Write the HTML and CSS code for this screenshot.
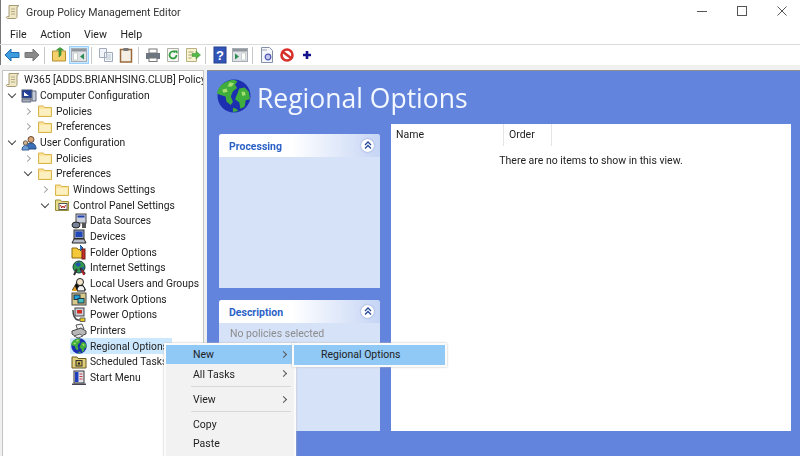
FILE: index.html
```html
<!DOCTYPE html>
<html lang="en">
<head>
  <meta charset="UTF-8">
  <title>Group Policy Management Editor</title>
  <link rel="stylesheet" href="styles.css">
</head>
<body>
  <svg class="defs" width="0" height="0">
    <symbol id="scroll" viewBox="0 0 16 16">
      <path d="M4 1.500h10l-2 1.500v9.500c0 1.500-1 2-2 2H2.500c-1.200 0-1.500-2 0-2H4z" fill="#efe6c4" stroke="#a49a78"/>
      <path d="M6 5h4M6 7.500h4M6 10h4" stroke="#b3a985"/>
    </symbol>
    <symbol id="folder" viewBox="0 0 16 16">
      <path d="M1.500 3h5l1 1.500h7v9h-13z" fill="#fbe39a" stroke="#d9b44f"/>
      <path d="M2.500 6h11v6.500h-11z" fill="#fdf0c0"/>
    </symbol>
    <symbol id="cpfolder" viewBox="0 0 16 16">
      <path d="M1.500 3h5l1 1.500h7v9h-13z" fill="#e9dc8a" stroke="#9a8f3a"/>
      <rect x="5" y="6.500" width="8" height="6" fill="#fff" stroke="#555"/>
      <path d="M6.500 8l1.200 3 1.300-2 1.300 2 1.200-3" fill="none" stroke="#b02020"/>
    </symbol>
    <symbol id="computer" viewBox="0 0 16 16">
      <rect x="1" y="2" width="10" height="8" fill="#20409a" stroke="#44506a"/>
      <path d="M3 4l5 4H3z" fill="#fff"/>
      <path d="M11 3h4v10h-4z" fill="#c7ccd8" stroke="#60687c"/>
      <path d="M1 11h9v3H1z" fill="#a8aebc" stroke="#60687c"/>
    </symbol>
    <symbol id="user" viewBox="0 0 16 16">
      <circle cx="10" cy="4.500" r="3" fill="#d9a679" stroke="#6a4a30"/>
      <path d="M5 14c0-4 2-6 5-6s5 2 5 6z" fill="#3a70b8" stroke="#274c80"/>
      <circle cx="4.500" cy="8" r="2.200" fill="#cdb090" stroke="#706050"/>
      <path d="M1 15c0-3 1.500-4.500 3.500-4.500S8 12 8 15z" fill="#6f9fd8" stroke="#3a5f90"/>
    </symbol>
    <symbol id="datasrc" viewBox="0 0 16 16">
      <rect x="5" y="1" width="10" height="9" fill="#c9cfdc" stroke="#444"/>
      <rect x="6.500" y="2.500" width="7" height="2" fill="#2040b0"/>
      <ellipse cx="5" cy="12" rx="4" ry="3" fill="#78839a" stroke="#222"/>
      <path d="M11 10v5h4v-5z" fill="#555"/>
    </symbol>
    <symbol id="device" viewBox="0 0 16 16">
      <rect x="3" y="1" width="10" height="8.500" fill="#9aa4c0" stroke="#333"/>
      <rect x="4.500" y="2.500" width="7" height="5.500" fill="#2048b8"/>
      <path d="M1 14l2-4h10l2 4z" fill="#b8bcc8" stroke="#222"/>
    </symbol>
    <symbol id="folderopt" viewBox="0 0 16 16">
      <path d="M1 4h5l1 1.500h5v8.500H1z" fill="#f5c83a" stroke="#8a6a10"/>
      <path d="M9 1l3 3-3 3" fill="#2f78c8" stroke="#204880"/>
      <rect x="11" y="5" width="3" height="10" fill="#c8302a" stroke="#701810"/>
    </symbol>
    <symbol id="internet" viewBox="0 0 16 16">
      <circle cx="8" cy="7" r="6" fill="#2f9a50" stroke="#1a3a40"/>
      <path d="M4 4l4-2 2 3-3 2zM9 8l4-1-1 4-3 1z" fill="#2050b0"/>
      <path d="M9 8l5 6M6 9l-3 6" stroke="#333" stroke-width="2"/>
      <path d="M11 10l2 5" stroke="#b02020" stroke-width="2"/>
    </symbol>
    <symbol id="users" viewBox="0 0 16 16">
      <path d="M1 14L8 2l7 12z" fill="#101010"/>
      <circle cx="9" cy="6" r="3.500" fill="#f1e4c8" stroke="#222"/>
      <path d="M6 15c0-3.500 1.500-5.500 4-5.500s4 2 4 5.500z" fill="#f0f0f0" stroke="#111"/>
      <path d="M1 15l3-5 2 5z" fill="#e0a020"/>
    </symbol>
    <symbol id="network" viewBox="0 0 16 16">
      <rect x="1" y="2" width="14" height="12" fill="#d6c98a" stroke="#444"/>
      <rect x="3" y="4" width="6" height="4.500" fill="#20a0d8" stroke="#234"/>
      <rect x="7" y="7.500" width="6" height="4.500" fill="#40c0c0" stroke="#234"/>
    </symbol>
    <symbol id="power" viewBox="0 0 16 16">
      <rect x="4" y="1" width="9" height="8" fill="#ccd0dc" stroke="#444"/>
      <rect x="6" y="3" width="5" height="3.500" fill="#d03020"/>
      <path d="M2 3c0 6 1 9 5 10h4" fill="none" stroke="#444" stroke-width="1.500"/>
      <path d="M9 11h5v3.500H9z" fill="#e8c820" stroke="#665"/>
    </symbol>
    <symbol id="printer" viewBox="0 0 16 16">
      <path d="M5 2l6-1 2 5-6 2z" fill="#f4f4f4" stroke="#555"/>
      <path d="M1 8l9-3 5 3v3l-9 3.500L1 11z" fill="#b8b8b8" stroke="#444"/>
      <path d="M3 13l6-2 3 2-5 2z" fill="#e8e8e8" stroke="#666"/>
    </symbol>
    <symbol id="globe" viewBox="0 0 32 32">
      <circle cx="16" cy="16" r="15.500" fill="#1c2fb0"/>
      <path d="M9 2.500c4-2 9-2 10 0l-2 3 2 3-4 3-2 5 2 5-2 3-4-3-1-5-6-2-2-1C1 8 5 4 9 2.500z" fill="#3fae3c"/>
      <path d="M21 9l5-1 4 4 1 7-4 1-1 6-4 2-1-6-4-3 2-5z" fill="#3fae3c"/>
      <path d="M12 3l4 1-2 3-4 0zM5 10l4-1 1 3-4 1zM23 12l3 0 1 3-3 1z" fill="#a8e070"/>
      <path d="M15 27l3 1 2 2-5 1z" fill="#3fae3c"/>
    </symbol>
    <symbol id="sched" viewBox="0 0 16 16">
      <path d="M1 3h5l1 1.500h8V14H1z" fill="#e2cf7c" stroke="#6a5a20"/>
      <rect x="5" y="6.500" width="6" height="5.500" fill="#c9b24c" stroke="#333"/>
      <rect x="7" y="8.500" width="2" height="2" fill="#222"/>
    </symbol>
    <symbol id="startmenu" viewBox="0 0 16 16">
      <rect x="3" y="1" width="10" height="12" fill="#e4e4ec" stroke="#333"/>
      <rect x="4" y="2" width="3.500" height="10" fill="#2040c0"/>
      <path d="M8.500 4h3M8.500 6.500h3M8.500 9h3" stroke="#c04040"/>
      <path d="M1 13.500h14V15H1z" fill="#445"/>
    </symbol>
  </svg>

  <div class="window">
    <div class="titlebar">
      <svg class="icon title-icon"><use href="#scroll"/></svg>
      <span class="title-text">Group Policy Management Editor</span>
      <div class="winbtns">
        <svg width="10" height="10" viewBox="0 0 10 10"><path d="M0 5.500h10" stroke="#555"/></svg>
        <svg width="10" height="10" viewBox="0 0 10 10"><rect x=".5" y=".5" width="9" height="9" fill="none" stroke="#555"/></svg>
        <svg width="10" height="10" viewBox="0 0 10 10"><path d="M.5 .5l9 9M9.500 .5l-9 9" stroke="#555"/></svg>
      </div>
    </div>

    <div class="menubar">
      <span>File</span><span>Action</span><span>View</span><span>Help</span>
    </div>

    <div class="toolbar">
      <span class="tool"><svg width="16" height="14" viewBox="0 0 16 14"><path d="M7 1L1 7l6 6V9.500h8v-5H7z" fill="#3d9be0" stroke="#2070b8"/></svg></span>
      <span class="tool"><svg width="16" height="14" viewBox="0 0 16 14"><path d="M9 1l6 6-6 6V9.500H1v-5h8z" fill="#8a8a8a" stroke="#777"/></svg></span>
      <i class="sep"></i>
      <span class="tool"><svg width="16" height="16" viewBox="0 0 16 16"><path d="M1.500 4h13v10h-13z" fill="#f3d06a" stroke="#b59030"/><path d="M8 10V3H5.500L9 .5 12.500 3H10v5z" fill="#3da83a" stroke="#2a7a28" stroke-width=".6"/></svg></span>
      <span class="tool active"><svg width="16" height="14" viewBox="0 0 16 14"><rect x=".5" y=".5" width="15" height="13" fill="#dfe3e8" stroke="#a8adb4"/><path d="M1 1h14v2.500H1z" fill="#8f969e"/><path d="M2.500 5h4v7h-4z" fill="#fff" stroke="#a5b0a5" stroke-width=".5"/><path d="M13 5.500v6L9 8.500z" fill="#2d8a50"/></svg></span>
      <i class="sep"></i>
      <span class="tool"><svg width="16" height="16" viewBox="0 0 16 16"><path d="M1.500 1.500h7v9h-7zM6.500 5.500h8v9h-8z" fill="#f2f5f9" stroke="#a0aab8"/><path d="M8 8h5M8 10h5M8 12h5" stroke="#b8c4d2"/></svg></span>
      <span class="tool"><svg width="16" height="16" viewBox="0 0 16 16"><rect x="2.500" y="2.500" width="11" height="12.500" fill="#f4efe2" stroke="#9a6a3c" stroke-width="1.500"/><rect x="5.500" y="1" width="5" height="3" fill="#777"/></svg></span>
      <i class="sep"></i>
      <span class="tool"><svg width="16" height="14" viewBox="0 0 16 14"><rect x="4" y="1" width="8" height="4" fill="#fff" stroke="#777"/><rect x="1" y="5" width="14" height="6" fill="#6d7680"/><rect x="4" y="10" width="8" height="3.500" fill="#fff" stroke="#777"/></svg></span>
      <span class="tool"><svg width="16" height="16" viewBox="0 0 16 16"><path d="M2.500 1.500h11v13h-11z" fill="#f6f6f2" stroke="#b0b0a8"/><path d="M11.500 8a3.500 3.500 0 1 1-1.200-2.700" fill="none" stroke="#2f9a3a" stroke-width="1.700"/><path d="M9 3.500h3.500V7z" fill="#2f9a3a"/></svg></span>
      <span class="tool"><svg width="16" height="16" viewBox="0 0 16 16"><path d="M1.500 1.500h10v13h-10z" fill="#f8f3d0" stroke="#b8b080"/><path d="M3.500 5h5M3.500 8h3M3.500 11h3" stroke="#a8a070"/><path d="M7 6.500h4V4l4.500 4-4.500 4V9.500H7z" fill="#52b848" stroke="#3a8a34" stroke-width=".5"/></svg></span>
      <i class="sep"></i>
      <span class="tool"><svg width="16" height="18" viewBox="0 0 16 18"><rect x="2" y="1" width="12" height="16" fill="#3355b8" stroke="#22408c"/><text class="help-q" x="8" y="13.500">?</text></svg></span>
      <span class="tool"><svg width="16" height="14" viewBox="0 0 16 14"><rect x=".5" y=".5" width="15" height="13" fill="#dfe3e8" stroke="#a8adb4"/><path d="M1 1h14v2.500H1z" fill="#8f969e"/><path d="M3 5.500v6L7 8.500z" fill="#2d8a50"/><path d="M9.500 5h4v7h-4z" fill="#fff" stroke="#a5b0a5" stroke-width=".5"/></svg></span>
      <i class="sep"></i>
      <span class="tool"><svg width="16" height="18" viewBox="0 0 16 18"><path d="M2.500 1.500h8l3 3v12h-11z" fill="#f4f6fb" stroke="#8490a8"/><path d="M3 4h5" stroke="#9aa4b8"/><circle cx="9" cy="11" r="2.800" fill="#c2c8f0" stroke="#5058b0" stroke-width="1.200"/></svg></span>
      <span class="tool"><svg width="14" height="14" viewBox="0 0 14 14"><circle cx="7" cy="7" r="5.500" fill="#fff" stroke="#d8302a" stroke-width="2.600"/><path d="M3 4l8 6" stroke="#d8302a" stroke-width="2.600"/></svg></span>
      <span class="tool"><svg width="10" height="10" viewBox="0 0 10 10"><path d="M5 1v8M1 5h8" stroke="#12128c" stroke-width="2.600"/></svg></span>
    </div>

    <div class="main">
      <div class="tree">
        <div class="row lv0"><svg class="icon"><use href="#scroll"/></svg><span class="label">W365 [ADDS.BRIANHSING.CLUB] Policy</span></div>
        <div class="row lv1"><i class="arrow open"></i><svg class="icon"><use href="#computer"/></svg><span class="label">Computer Configuration</span></div>
        <div class="row lv2"><i class="arrow"></i><svg class="icon"><use href="#folder"/></svg><span class="label">Policies</span></div>
        <div class="row lv2"><i class="arrow"></i><svg class="icon"><use href="#folder"/></svg><span class="label">Preferences</span></div>
        <div class="row lv1"><i class="arrow open"></i><svg class="icon"><use href="#user"/></svg><span class="label">User Configuration</span></div>
        <div class="row lv2"><i class="arrow"></i><svg class="icon"><use href="#folder"/></svg><span class="label">Policies</span></div>
        <div class="row lv2"><i class="arrow open"></i><svg class="icon"><use href="#folder"/></svg><span class="label">Preferences</span></div>
        <div class="row lv3"><i class="arrow"></i><svg class="icon"><use href="#folder"/></svg><span class="label">Windows Settings</span></div>
        <div class="row lv3"><i class="arrow open"></i><svg class="icon"><use href="#cpfolder"/></svg><span class="label">Control Panel Settings</span></div>
        <div class="row lv4"><i class="arrow none"></i><svg class="icon"><use href="#datasrc"/></svg><span class="label">Data Sources</span></div>
        <div class="row lv4"><i class="arrow none"></i><svg class="icon"><use href="#device"/></svg><span class="label">Devices</span></div>
        <div class="row lv4"><i class="arrow none"></i><svg class="icon"><use href="#folderopt"/></svg><span class="label">Folder Options</span></div>
        <div class="row lv4"><i class="arrow none"></i><svg class="icon"><use href="#internet"/></svg><span class="label">Internet Settings</span></div>
        <div class="row lv4"><i class="arrow none"></i><svg class="icon"><use href="#users"/></svg><span class="label">Local Users and Groups</span></div>
        <div class="row lv4"><i class="arrow none"></i><svg class="icon"><use href="#network"/></svg><span class="label">Network Options</span></div>
        <div class="row lv4"><i class="arrow none"></i><svg class="icon"><use href="#power"/></svg><span class="label">Power Options</span></div>
        <div class="row lv4"><i class="arrow none"></i><svg class="icon"><use href="#printer"/></svg><span class="label">Printers</span></div>
        <div class="row lv4 selected"><i class="arrow none"></i><svg class="icon"><use href="#globe"/></svg><span class="label">Regional Options</span></div>
        <div class="row lv4"><i class="arrow none"></i><svg class="icon"><use href="#sched"/></svg><span class="label">Scheduled Tasks</span></div>
        <div class="row lv4"><i class="arrow none"></i><svg class="icon"><use href="#startmenu"/></svg><span class="label">Start Menu</span></div>
      </div>

      <div class="content">
        <div class="content-head">
          <svg class="head-globe"><use href="#globe"/></svg>
          <h1>Regional Options</h1>
        </div>
        <div class="content-body">
          <div class="side">
            <section class="panel processing">
              <div class="panel-head">Processing<span class="collapse"><svg width="8" height="8" viewBox="0 0 8 8"><path d="M1 4l3-3 3 3M1 7.500l3-3 3 3" fill="none" stroke="#24489c" stroke-width="1.300"/></svg></span></div>
            </section>
            <section class="panel description">
              <div class="panel-head">Description<span class="collapse"><svg width="8" height="8" viewBox="0 0 8 8"><path d="M1 4l3-3 3 3M1 7.500l3-3 3 3" fill="none" stroke="#24489c" stroke-width="1.300"/></svg></span></div>
              <p class="panel-text">No policies selected</p>
            </section>
          </div>
          <div class="listview">
            <div class="list-head">
              <span class="col-name">Name</span>
              <span class="col-order">Order</span>
            </div>
            <p class="empty">There are no items to show in this view.</p>
          </div>
        </div>
      </div>
    </div>

    <div class="menu ctx">
      <div class="menu-item hot">New<i class="more"></i></div>
      <div class="menu-item">All Tasks<i class="more"></i></div>
      <div class="menu-sep"></div>
      <div class="menu-item">View<i class="more"></i></div>
      <div class="menu-sep"></div>
      <div class="menu-item">Copy</div>
      <div class="menu-item">Paste</div>
    </div>
    <div class="menu sub">
      <div class="menu-item hot">Regional Options</div>
    </div>
  </div>
</body>
</html>
```

FILE: styles.css
```css
body {
  margin: 0;
  background: #fff;
  font-family: Roboto, "Noto Sans", sans-serif;
  font-size: 10.5px;
  color: #222;
  overflow: hidden;
}
.defs {
  position: absolute;
}
.window {
  position: relative;
  width: 800px;
  height: 456px;
  display: flex;
  flex-direction: column;
  overflow: hidden;
  filter: blur(0.35px);
}
.icon {
  width: 16px;
  height: 16px;
  flex: none;
}
.titlebar,
.menubar,
.toolbar {
  box-shadow: inset 1px 0 #777;
}
.titlebar {
  height: 24px;
  display: flex;
  align-items: center;
  padding-left: 5px;
  font-size: 10.6px;
  color: #333;
}
.title-icon {
  margin-right: 5px;
}
.winbtns {
  margin-left: auto;
  display: flex;
  gap: 30px;
  padding: 0 13px 2px 0;
}
.menubar {
  height: 20px;
  display: flex;
  align-items: center;
  gap: 13.5px;
  padding-left: 10px;
  border-bottom: 1px solid #d9dcd9;
  font-size: 10.6px;
}
.toolbar {
  height: 20px;
  display: flex;
  align-items: center;
  padding-left: 2px;
}
.tool {
  width: 20px;
  height: 18px;
  box-sizing: border-box;
  display: flex;
  align-items: center;
  justify-content: center;
}
.tool.active {
  background: #cce8ff;
  border: 1px solid #99d1ff;
}
.help-q {
  font-family: "Liberation Sans", sans-serif;
  font-size: 13px;
  font-weight: bold;
  fill: #fff;
  text-anchor: middle;
}
.sep {
  width: 1px;
  height: 17px;
  margin: 0 4px 0 2px;
  background: #c8c8c8;
}
.main {
  flex: 1;
  min-height: 0;
  display: flex;
  gap: 3px;
  padding-top: 5px;
  background: #f0f0f0;
}
.tree {
  width: 202px;
  box-sizing: border-box;
  margin-left: 2px;
  background: #fff;
  border: 1px solid #c4c4c4;
  border-bottom: 0;
  padding-top: 1px;
  overflow: hidden;
  font-size: 10.3px;
}
.row {
  height: 15.68px;
  display: flex;
  align-items: center;
  white-space: nowrap;
}
.lv0 { padding-left: 2px; }
.lv1 { padding-left: 1px; }
.lv2 { padding-left: 17px; }
.lv3 { padding-left: 34px; }
.lv4 { padding-left: 51px; }
.label {
  margin-left: 3px;
  line-height: 15px;
}
.selected {
  background: linear-gradient(#cce8ff, #cce8ff) 67px 0 / 102px 100% no-repeat;
}
.arrow {
  width: 16px;
  height: 15px;
  margin-right: 1px;
  flex: none;
  position: relative;
}
.arrow::before {
  content: "";
  position: absolute;
  left: 5px;
  top: 5px;
  width: 4px;
  height: 4px;
  border-top: 1px solid #a6a6a6;
  border-right: 1px solid #a6a6a6;
  transform: rotate(45deg);
}
.arrow.open::before {
  left: 5px;
  top: 3px;
  width: 5px;
  height: 5px;
  border-color: #444;
  transform: rotate(135deg);
}
.arrow.none::before {
  display: none;
}
.content {
  flex: 1;
  min-width: 0;
  display: flex;
  flex-direction: column;
  background: #6384dc;
  border-top: 1px solid #8e8e8e;
  padding: 0 9px 25px 12px;
}
.content-head {
  height: 53px;
  display: flex;
  align-items: center;
  gap: 6px;
  margin-left: -2px;
}
.head-globe {
  width: 34px;
  height: 34px;
  flex: none;
  margin-top: -4px;
}
.content-head h1 {
  margin: 0;
  font-family: "Open Sans", "Noto Sans", sans-serif;
  font-size: 26.5px;
  font-weight: normal;
  color: #f4f8ff;
  white-space: nowrap;
}
.content-body {
  flex: 1;
  min-height: 0;
  display: flex;
  gap: 11px;
}
.side {
  width: 161px;
  margin-top: 10px;
  display: flex;
  flex-direction: column;
  gap: 12px;
}
.panel {
  background: #d6e2f8;
  border-radius: 3px 3px 0 0;
}
.processing {
  height: 154px;
}
.description {
  flex: 1;
}
.panel-head {
  height: 23px;
  box-sizing: border-box;
  display: flex;
  align-items: center;
  justify-content: space-between;
  padding: 1px 6px 0 10px;
  border-radius: 3px 3px 0 0;
  background: linear-gradient(90deg, #fff 45%, #c6d5f5);
  font-weight: bold;
  color: #2c62c8;
}
.collapse {
  width: 13px;
  height: 13px;
  margin-top: -2px;
  display: flex;
  align-items: center;
  justify-content: center;
  border-radius: 50%;
  background: #fff;
  box-shadow: 0 0 2px #7890c8;
}
.panel-text {
  margin: 4px 0 0 11px;
  color: #8c8c8c;
}
.listview {
  flex: 1;
  min-width: 0;
  background: #fff;
}
.list-head {
  height: 22px;
  display: flex;
  align-items: center;
}
.list-head span {
  height: 100%;
  box-sizing: border-box;
  padding-left: 5px;
  line-height: 22px;
  border-right: 1px solid #e5e5e5;
}
.col-name {
  width: 113px;
}
.col-order {
  width: 48px;
}
.empty {
  margin: 8px 0 0;
  text-align: center;
}
.menu {
  position: absolute;
  box-sizing: border-box;
  background: #f2f2f2;
  border: 2px solid #fbfbfb;
  box-shadow: 0 0 2px #bbb;
}
.ctx {
  left: 164px;
  top: 343px;
  width: 132px;
  height: 130px;
}
.sub {
  left: 292px;
  top: 343px;
  width: 155px;
  height: 24px;
}
.menu-item {
  height: 19px;
  line-height: 19px;
  padding-left: 27px;
  position: relative;
}
.ctx .menu-item:nth-child(2) { height: 20px; line-height: 22px; }
.ctx .menu-item:nth-child(6) { margin-top: 3px; }
.hot {
  background: #90c8f6;
}
.sub .menu-item {
  height: 20px;
  line-height: 20px;
}
.more {
  position: absolute;
  right: 8px;
  top: 7px;
  width: 4px;
  height: 4px;
  border-top: 1px solid #555;
  border-right: 1px solid #555;
  transform: rotate(45deg);
}
.menu-sep {
  height: 1px;
  margin: 2px 3px 3px 25px;
  background: #d8d8d8;
}
```
